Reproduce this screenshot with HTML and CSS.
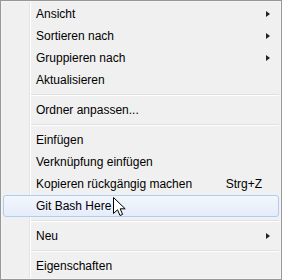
FILE: index.html
```html
<!DOCTYPE html>
<html lang="de">
<head>
    <meta charset="UTF-8">
    <title>Kontextmenü</title>
    <link rel="stylesheet" href="styles.css">
</head>
<body>
    <div class="menu">
        <div class="item">Ansicht<span class="arrow"></span></div>
        <div class="item">Sortieren nach<span class="arrow"></span></div>
        <div class="item">Gruppieren nach<span class="arrow"></span></div>
        <div class="item">Aktualisieren</div>
        <div class="sep"></div>
        <div class="item">Ordner anpassen...</div>
        <div class="sep"></div>
        <div class="item">Einfügen</div>
        <div class="item">Verknüpfung einfügen</div>
        <div class="item">Kopieren rückgängig machen<span class="key">Strg+Z</span></div>
        <div class="item hover">Git Bash Here</div>
        <div class="sep"></div>
        <div class="item">Neu<span class="arrow"></span></div>
        <div class="sep"></div>
        <div class="item">Eigenschaften</div>
    </div>

    <!-- Mauszeiger -->
    <svg class="cursor" width="13" height="20" viewBox="0 0 13 20">
        <path d="M0.5 0.5 L0.5 16.5 L4.5 12.8 L7 18.5 L9.6 17.4 L7.2 11.8 L12.2 11.8 Z" fill="#fff" stroke="#000" stroke-width="1" stroke-linejoin="miter"/>
    </svg>
</body>
</html>
```

FILE: styles.css
```css
html, body {
    margin: 0;
    padding: 0;
}
body {
    font-family: "Segoe UI", "Liberation Sans", Arial, sans-serif;
    font-size: 12px;
    color: #000;
}
.menu {
    position: relative;
    width: 282px;
    height: 280px;
    box-sizing: border-box;
    border: 1px solid #979797;
    box-shadow: inset 0 0 0 1px #f5f5f5;
    background: #f0f0f0;
    padding: 2px;
}
/* Trennlinie der Icon-Spalte */
.menu::before {
    content: "";
    position: absolute;
    left: 28px;
    top: 1px;
    bottom: 1px;
    width: 1px;
    background: #e2e3e3;
    border-right: 1px solid #fff;
}
.item {
    position: relative;
    height: 22px;
    line-height: 21px;
    padding-left: 32px;
    display: flex;
    align-items: center;
    box-sizing: border-box;
    border: 1px solid transparent;
    border-radius: 3px;
}
.item.hover {
    border-color: #aecdf4;
    background: linear-gradient(#f2f6fd, #e5edfa);
}
.key {
    margin-left: auto;
    margin-right: 16px;
}
.arrow {
    margin-left: auto;
    margin-right: 8px;
    width: 0;
    height: 0;
    border-top: 3.5px solid transparent;
    border-bottom: 3.5px solid transparent;
    border-left: 4px solid #222;
}
.sep {
    height: 8px;
    margin-left: 28px;
    display: flex;
    align-items: center;
}
.sep::after {
    content: "";
    flex: 1;
    height: 1px;
    background: #e0e0e0;
    border-bottom: 1px solid #fff;
}
.cursor {
    position: absolute;
    left: 113px;
    top: 197px;
}
```
